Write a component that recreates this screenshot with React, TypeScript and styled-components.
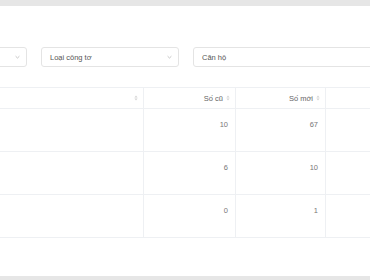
import React from "react";
import styled, { createGlobalStyle } from "styled-components";

const Global = createGlobalStyle`
  html, body { margin: 0; padding: 0; background: #fff; }
  body {
    font-family: "Liberation Sans", Arial, sans-serif;
    overflow: hidden;
    -webkit-font-smoothing: antialiased;
  }
  * { box-sizing: border-box; }
`;

const Page = styled.div`
  width: 370px;
  height: 280px;
  display: flex;
  flex-direction: column;
  overflow: hidden;
  background: #fff;
`;

const GrayBar = styled.div<{ $h: number }>`
  height: ${(p) => p.$h}px;
  flex: none;
  background: #e6e6e6;
`;

const Content = styled.div`
  flex: 1;
  overflow: hidden;
  padding-top: 41px;
`;

const Inner = styled.div`
  margin-left: -111px;
  width: 600px;
  display: flex;
  flex-direction: column;
  gap: 20px;
`;

const Filters = styled.div`
  display: flex;
  gap: 14px;
`;

const Select = styled.div<{ $w: number }>`
  width: ${(p) => p.$w}px;
  height: 20px;
  border: 1px solid #e4e4e4;
  border-radius: 3px;
  display: flex;
  align-items: center;
  justify-content: space-between;
  padding: 0 6px 0 8px;
  font-size: 7.5px;
  color: #555;
  background: #fff;
`;

const Chevron = () => (
  <svg width="5" height="4" viewBox="0 0 5 4">
    <path d="M0.6 1.2 L2.5 3 L4.4 1.2" fill="none" stroke="#b5b5b5" strokeWidth="0.8" />
  </svg>
);

const SortIcon = () => (
  <svg width="4" height="6" viewBox="0 0 4 6">
    <path d="M2 0.4 L3.6 2.4 L0.4 2.4 Z" fill="#d4d4d4" />
    <path d="M2 5.6 L3.6 3.6 L0.4 3.6 Z" fill="#d4d4d4" />
  </svg>
);

const Table = styled.div`
  display: grid;
  grid-template-columns: 255px 92px 90px 150px;
  border-top: 1px solid #eef0f3;
`;

const HeadCell = styled.div<{ $last?: boolean }>`
  height: 21px;
  display: flex;
  align-items: center;
  justify-content: flex-end;
  gap: 3px;
  padding-right: 5px;
  font-size: 7.5px;
  color: #666;
  border-bottom: 1px solid #eef0f3;
  border-right: ${(p) => (p.$last ? "none" : "1px solid #eef0f3")};
`;

const Cell = styled.div<{ $last?: boolean }>`
  height: 43px;
  padding: 11px 7px 0 0;
  text-align: right;
  font-size: 7.5px;
  color: #777;
  border-bottom: 1px solid #eef0f3;
  border-right: ${(p) => (p.$last ? "none" : "1px solid #eef0f3")};
`;

const rows = [
  ["10", "67"],
  ["6", "10"],
  ["0", "1"],
];

export default function App() {
  return (
    <>
      <Global />
      <Page>
        <GrayBar $h={6} />
        <Content>
          <Inner>
            <Filters>
              <Select $w={138}>
                <span />
                <Chevron />
              </Select>
              <Select $w={138}>
                <span>Loại công tơ</span>
                <Chevron />
              </Select>
              <Select $w={220}>
                <span>Căn hộ</span>
              </Select>
            </Filters>
            <Table>
              <HeadCell>
                <SortIcon />
              </HeadCell>
              <HeadCell>
                Số cũ <SortIcon />
              </HeadCell>
              <HeadCell>
                Số mới <SortIcon />
              </HeadCell>
              <HeadCell $last />
              {rows.map((r, i) => (
                <React.Fragment key={i}>
                  <Cell />
                  <Cell>{r[0]}</Cell>
                  <Cell>{r[1]}</Cell>
                  <Cell $last />
                </React.Fragment>
              ))}
            </Table>
          </Inner>
        </Content>
        <GrayBar $h={4} />
      </Page>
    </>
  );
}
